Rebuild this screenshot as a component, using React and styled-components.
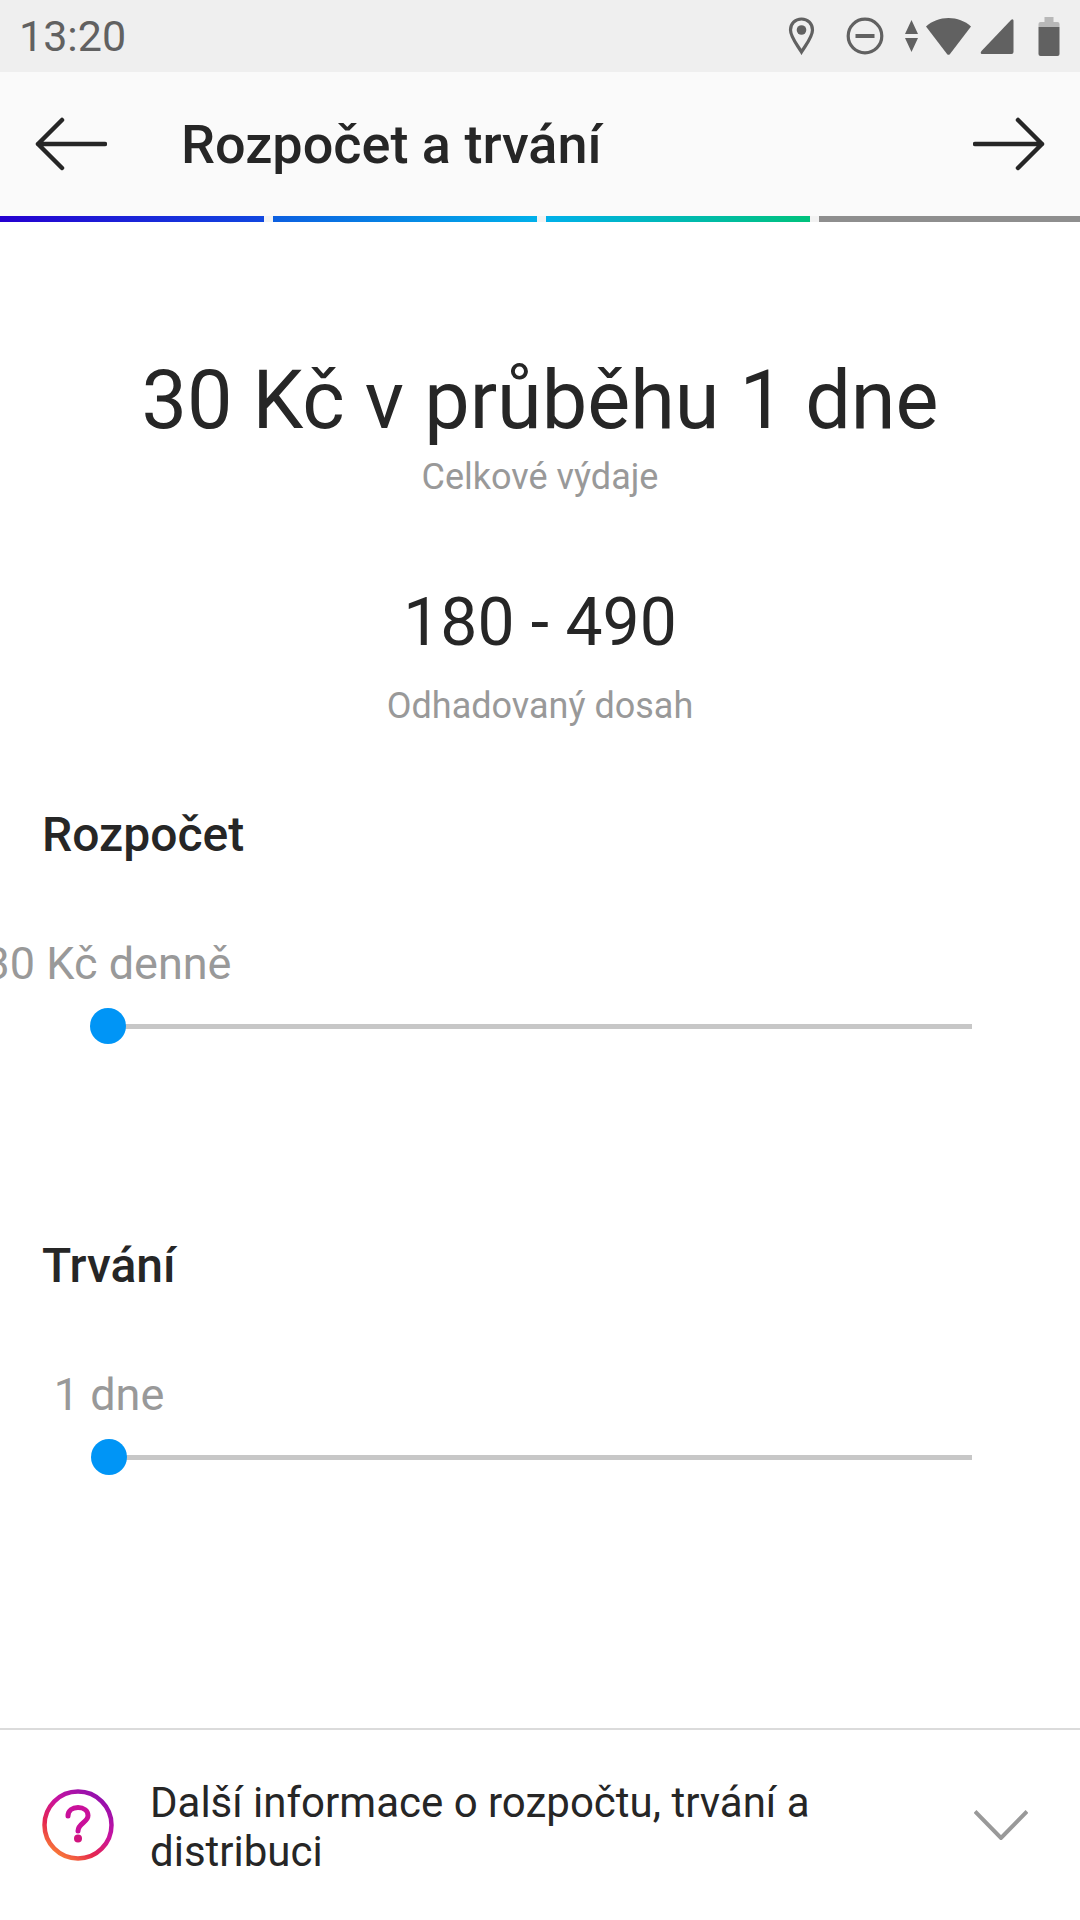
import styled, { createGlobalStyle } from "styled-components";

const GlobalStyle = createGlobalStyle`
  html, body {
    margin: 0;
    padding: 0;
    background: #fff;
  }
  body {
    font-family: Roboto, "Noto Sans", sans-serif;
    color: #262626;
  }
`;

const Page = styled.div`
  width: 1080px;
  height: 1920px;
  display: flex;
  flex-direction: column;
  overflow: hidden;
  background: #fff;
`;

const StatusBar = styled.div`
  height: 72px;
  flex: none;
  display: flex;
  align-items: center;
  background: #efefef;
  padding: 0 20px 0 19px;
  color: #616161;
`;

const Time = styled.span`
  font-size: 43px;
  line-height: 72px;
  flex: 1;
`;

const StatusIcons = styled.div`
  display: flex;
  align-items: center;
`;

const StatusIcon = styled.svg`
  display: block;
  margin-left: ${(props) => props.$gap || 0}px;
  fill: #616161;
`;

const Header = styled.div`
  height: 144px;
  flex: none;
  display: flex;
  align-items: center;
  background: #fafafa;
  padding: 0 35px;
`;

const HeaderTitle = styled.h1`
  flex: 1;
  margin: 2px 0 0 74px;
  font-size: 54px;
  font-weight: 500;
  line-height: 66px;
  color: #262626;
`;

const Progress = styled.div`
  flex: none;
  display: grid;
  grid-template-columns: repeat(3, 264px) 1fr;
  column-gap: 9px;
  height: 6px;
  background: #f2f2f2;
`;

const Step = styled.div`
  background: ${(props) => props.$bg};
`;

const Summary = styled.div`
  display: flex;
  flex-direction: column;
  align-items: center;
  padding-top: 129px;
`;

const Headline = styled.div`
  font-size: 81px;
  line-height: 100px;
  color: #262626;
`;

const Caption = styled.div`
  font-size: 36px;
  line-height: 44px;
  color: #999;
  margin-top: ${(props) => props.$top}px;
`;

const Reach = styled.div`
  font-size: 66px;
  line-height: 76px;
  color: #262626;
  margin-top: 86px;
`;

const Section = styled.section`
  margin-top: ${(props) => props.$top}px;
  height: ${(props) => props.$height}px;
`;

const SectionTitle = styled.h2`
  margin: 0;
  padding-left: 42px;
  font-size: 48px;
  font-weight: 500;
  line-height: 56px;
  color: #262626;
`;

const SliderBlock = styled.div`
  margin: ${(props) => props.$top}px 108px 0 ${(props) => props.$left}px;
`;

/* the label is centred on the thumb, and may run off the page */
const ValueAnchor = styled.div`
  width: 0;
  display: flex;
  justify-content: center;
  white-space: nowrap;
  font-size: 45px;
  line-height: 52px;
  color: #999;
`;

const Track = styled.div`
  position: relative;
  height: 5px;
  margin-top: 34px;
  background: #c7c7c7;
`;

const Thumb = styled.div`
  position: absolute;
  left: -18px;
  top: -16px;
  width: 36px;
  height: 36px;
  border-radius: 50%;
  background: #0095f6;
`;

const Footer = styled.div`
  margin-top: auto;
  height: 190px;
  flex: none;
  display: flex;
  align-items: center;
  border-top: 2px solid #dbdbdb;
  padding: 0 52px 0 42px;
`;

const FooterText = styled.div`
  flex: 1;
  margin-left: 36px;
  padding-top: 4px;
  font-size: 42px;
  line-height: 49px;
  color: #262626;
  max-width: 700px;
`;

const Chevron = styled.svg`
  display: block;
  margin-left: auto;
`;

const Stroke = styled.svg`
  display: block;
  fill: none;
  stroke: #262626;
  stroke-width: 4.5;
  stroke-linecap: round;
  stroke-linejoin: round;
`;

const Slider = ({ value, left, top }) => (
  <SliderBlock $left={left} $top={top}>
    <ValueAnchor>{value}</ValueAnchor>
    <Track>
      <Thumb />
    </Track>
  </SliderBlock>
);

const App = () => (
  <Page>
    <GlobalStyle />
    <StatusBar>
      <Time>13:20</Time>
      <StatusIcons>
        <StatusIcon width="27" height="38" viewBox="0 0 26 38">
          <path
            d="M13 2C6.500 2 2 6.800 2 13c0 7 6.500 14.500 11 22 4.500-7.500 11-15 11-22C24 6.800 19.500 2 13 2Z"
            fill="none"
            stroke="#616161"
            strokeWidth="3.200"
          />
          <circle cx="13" cy="13" r="4.800" />
        </StatusIcon>
        <StatusIcon $gap="31" width="38" height="38" viewBox="0 0 38 38">
          <circle cx="19" cy="19" r="16.800" fill="none" stroke="#616161" strokeWidth="3.200" />
          <rect x="9.500" y="17" width="19" height="4" />
        </StatusIcon>
        <StatusIcon $gap="21" width="13" height="32" viewBox="0 0 13 32">
          <path d="M6.500 0 13 14H0ZM0 18h13L6.500 32Z" />
        </StatusIcon>
        <StatusIcon $gap="8" width="45" height="37" viewBox="0 0 45 37">
          <path d="M0 8.500C6 3 14 0 22.500 0S39 3 45 8.500L24 36a2 2 0 0 1-3 0Z" />
        </StatusIcon>
        <StatusIcon $gap="9" width="34" height="35" viewBox="0 0 33 35">
          <path d="M33 2v31a2 2 0 0 1-2 2H2c-2 0-2.300-1.500-1-3L30.500 1C32 -.5 33 .5 33 2Z" />
        </StatusIcon>
        <StatusIcon $gap="24" width="22" height="39" viewBox="0 0 21 39">
          <path d="M6 0h9v5h4a2 2 0 0 1 2 2v3H0V7a2 2 0 0 1 2-2h4Z" fill="#b8b8b8" />
          <path d="M0 10h21v27a2 2 0 0 1-2 2H2a2 2 0 0 1-2-2Z" />
        </StatusIcon>
      </StatusIcons>
    </StatusBar>

    <Header>
      <Stroke width="72" height="54" viewBox="0 0 72 54">
        <path d="M3 27h67M27 3 3 27l24 24" />
      </Stroke>
      <HeaderTitle>Rozpočet a trvání</HeaderTitle>
      <Stroke width="72" height="54" viewBox="0 0 72 54">
        <path d="M2 27h67M45 3l24 24-24 24" />
      </Stroke>
    </Header>

    <Progress>
      <Step $bg="linear-gradient(90deg, #2500d0, #1047e0)" />
      <Step $bg="linear-gradient(90deg, #0c5fe0, #00b0ea)" />
      <Step $bg="linear-gradient(90deg, #00b0ea, #00c27c)" />
      <Step $bg="#8e8e8e" />
    </Progress>

    <Summary>
      <Headline>30 Kč v průběhu 1 dne</Headline>
      <Caption $top={4}>Celkové výdaje</Caption>
      <Reach>180 - 490</Reach>
      <Caption $top={23}>Odhadovaný dosah</Caption>
    </Summary>

    <Section $top={79} $height={431}>
      <SectionTitle>Rozpočet</SectionTitle>
      <Slider value="30 Kč denně" left={108} top={75} />
    </Section>

    <Section $top={0} $height={300}>
      <SectionTitle>Trvání</SectionTitle>
      <Slider value="1 dne" left={109} top={75} />
    </Section>

    <Footer>
      <svg width="72" height="72" viewBox="0 0 72 72">
        <defs>
          <linearGradient id="helpRing" x1="0.15" y1="1" x2="0.85" y2="0">
            <stop offset="0" stopColor="#fd8d32" />
            <stop offset="0.3" stopColor="#e5264f" />
            <stop offset="0.6" stopColor="#c913a0" />
            <stop offset="1" stopColor="#8a10b0" />
          </linearGradient>
        </defs>
        <circle cx="36" cy="36" r="33.500" fill="none" stroke="url(#helpRing)" strokeWidth="4.500" />
        <path
          d="M26 27c0-5.500 4.500-8.500 10-8.500s10 3 10 8c0 7-10 7.500-10 15.500"
          fill="none"
          stroke="#c9109a"
          strokeWidth="5"
          strokeLinecap="round"
        />
        <circle cx="36" cy="49.500" r="4" fill="#d0147e" />
      </svg>
      <FooterText>Další informace o rozpočtu, trvání a distribuci</FooterText>
      <Chevron width="54" height="30" viewBox="0 0 54 30" fill="none" stroke="#999" strokeWidth="4">
        <path d="M1 1.500 27 28 53 1.500" />
      </Chevron>
    </Footer>
  </Page>
);

export default App;
